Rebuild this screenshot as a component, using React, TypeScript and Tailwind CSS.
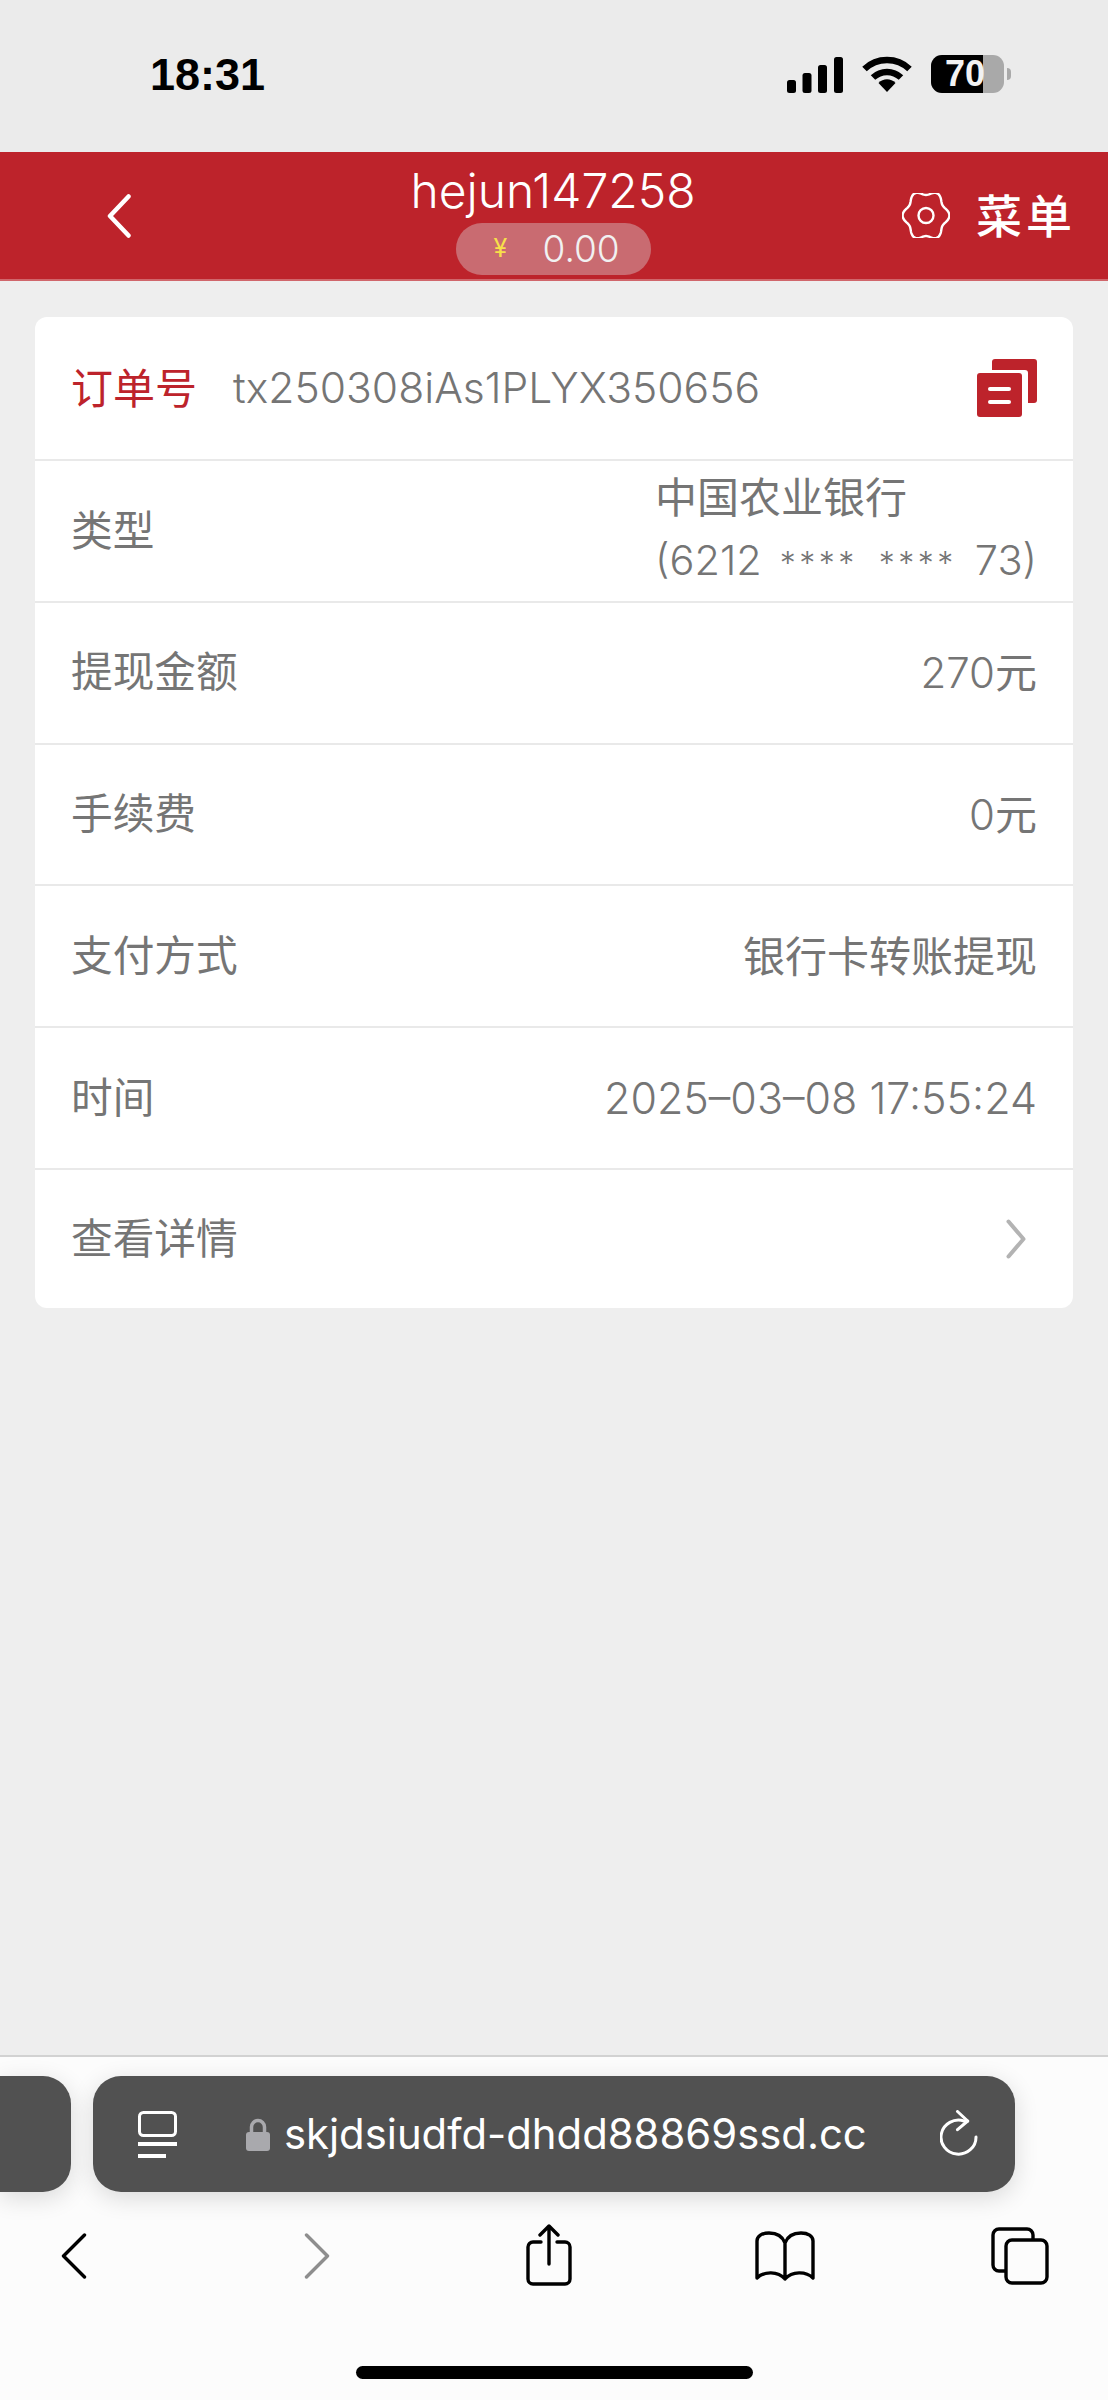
const cjk = 'Inter,"Noto Sans CJK SC",sans-serif';

// Wavy outline of the menu gear, sampled around a circle
const gearPath = (() => {
  const pts: string[] = [];
  for (let i = 0; i < 120; i++) {
    const t = (i / 120) * Math.PI * 2;
    const r = 21.2 + 2.2 * Math.cos(6 * t);
    pts.push(`${(24 + r * Math.cos(t)).toFixed(2)} ${(22.5 + r * 1.08 * Math.sin(t)).toFixed(2)}`);
  }
  return `M${pts.join('L')}Z`;
})();

function StatusBar() {
  return (
    <div className="h-[152px] shrink-0 bg-[#ebebeb] flex items-start pt-[55px] pl-[150px]">
      <span className="w-[637px] text-[45px] leading-[40px] font-bold text-black" style={{ fontFamily: '"Liberation Sans",sans-serif' }}>
        18:31
      </span>
      <svg width="56" height="36" viewBox="0 0 56 36" className="mt-[2px]">
        <rect x="0" y="23" width="9" height="13" rx="2.5" />
        <rect x="15.5" y="16" width="9" height="20" rx="2.5" />
        <rect x="31" y="8" width="9" height="28" rx="2.5" />
        <rect x="47" y="0" width="9" height="36" rx="2.5" />
      </svg>
      <svg width="50" height="36" viewBox="0 0 50 36" className="ml-[19px] mt-[1px]">
        <path d="M2.5 13C15 1 35 1 47.5 13" fill="none" stroke="#000" strokeWidth="6.5" />
        <path d="M11 21.5C19 14 31 14 39 21.5" fill="none" stroke="#000" strokeWidth="6.5" />
        <path d="M16.5 27C21 22 29 22 33.5 27L25 36Z" />
      </svg>
      <div className="ml-[19px] relative w-[73px] h-[38px] rounded-[11px] overflow-hidden bg-[#a9a9a9]">
        <div className="w-[52px] h-full bg-black" />
        <span className="absolute left-[14px] top-[1px] text-[36px] leading-[36px] font-bold text-[#f2f2f2]" style={{ fontFamily: '"Liberation Sans",sans-serif' }}>
          70
        </span>
      </div>
      <div className="ml-[3px] mt-[13px] w-[4px] h-[12px] rounded-r-full bg-[#a9a9a9]" />
    </div>
  );
}

function Header() {
  return (
    <div className="h-[129px] shrink-0 bg-[#bd232b] border-b-2 border-[#d0666b] flex items-center relative text-white" style={{ fontFamily: cjk }}>
      <svg width="24" height="44" viewBox="0 0 24 44" className="ml-[107px]">
        <path d="M21.5 2.5L3 22L21.5 41.5" fill="none" stroke="#fff" strokeWidth="4.5" strokeLinecap="round" strokeLinejoin="round" />
      </svg>
      <div className="absolute left-[355px] w-[396px] top-[13px] flex flex-col items-center">
        <div className="text-[48px] leading-[52px] font-light">hejun147258</div>
        <div className="w-[195px] h-[52px] mt-[6px] rounded-[26px] bg-[#c96b71] flex items-center pl-[38px]">
          <span className="text-[25px] text-[#f7e04a] w-[49px]">¥</span>
          <span className="text-[37px] font-light text-[#f1f1f1]">0.00</span>
        </div>
      </div>
      <div className="ml-auto mr-[32px] flex items-center gap-[26px]">
        <svg width="48" height="45" viewBox="0 0 48 45">
          <path d={gearPath} fill="none" stroke="#fff" strokeWidth="2.4" />
          <circle cx="24" cy="22.5" r="7.5" fill="none" stroke="#fff" strokeWidth="2.4" />
        </svg>
        <span className="text-[46px] leading-[52px] font-medium tracking-[4px]">菜单</span>
      </div>
    </div>
  );
}

function CopyIcon() {
  return (
    <svg width="60" height="58" viewBox="0 0 60 58" className="shrink-0">
      <path d="M15 3a3 3 0 0 1 3-3h39a3 3 0 0 1 3 3v38a3 3 0 0 1-3 3h-6V14a3 3 0 0 0-3-3H15Z" fill="#bd232b" />
      <rect x="0" y="14" width="45" height="44" rx="3" fill="#bd232b" />
      <rect x="11" y="28" width="23" height="4" rx="2" fill="#fff" />
      <rect x="11" y="41" width="23" height="4" rx="2" fill="#fff" />
    </svg>
  );
}

function Card() {
  const row = 'h-[141.8px] px-[36px] flex items-center justify-between border-b-2 border-[#e9e9e9]';
  const stars = 'text-[32px] tracking-[3.5px] font-light';
  const latin = 'font-light text-[42.6px]';
  return (
    <div className="mx-[35px] mt-[36px] bg-white rounded-[12px] overflow-hidden text-[41.7px] text-[#757575]" style={{ fontFamily: cjk }}>
      <div className="h-[144px] pl-[36px] pr-[36px] flex items-center border-b-2 border-[#e9e9e9]">
        <span className="text-[#bd232b] w-[162px] text-[42px]">订单号</span>
        <span className={`flex-1 ${latin}`}>tx250308iAs1PLYX350656</span>
        <CopyIcon />
      </div>
      <div className={row}>
        <span>类型</span>
        <div className="leading-[62px]">
          <div className="text-[42px]">中国农业银行</div>
          <div className="flex items-baseline font-light text-[41.5px]">
            <span>(6212</span>
            <span className={`${stars} ml-[18px]`}>****</span>
            <span className={`${stars} ml-[21px]`}>****</span>
            <span className="ml-[18px]">73)</span>
          </div>
        </div>
      </div>
      <div className={row}>
        <span>提现金额</span>
        <span className="text-[42px]"><span className="font-light">270</span>元</span>
      </div>
      <div className={row}>
        <span>手续费</span>
        <span className="text-[42px]"><span className="font-light">0</span>元</span>
      </div>
      <div className={row}>
        <span>支付方式</span>
        <span className="text-[42px]">银行卡转账提现</span>
      </div>
      <div className={row}>
        <span>时间</span>
        <span className="font-light text-[43px]">2025–03–08 17:55:24</span>
      </div>
      <div className="h-[138px] px-[36px] flex items-center justify-between">
        <span>查看详情</span>
        <svg width="20" height="40" viewBox="0 0 20 40" className="mr-[11px]">
          <path d="M2.5 2.5L17.5 20L2.5 37.5" fill="none" stroke="#b3b3b3" strokeWidth="4" strokeLinecap="round" strokeLinejoin="round" />
        </svg>
      </div>
    </div>
  );
}

function AddressBar() {
  return (
    <div className="h-[116px] mt-[19px] flex items-stretch">
      <div className="w-[71px] rounded-r-[28px] bg-[#515151] shadow-[0_6px_24px_rgba(0,0,0,0.14)]" />
      <div className="w-[922px] ml-[22px] rounded-[28px] bg-[#515151] shadow-[0_6px_24px_rgba(0,0,0,0.14)] flex items-center text-white">
        <svg width="40" height="47" viewBox="0 0 40 47" className="ml-[45px]">
          <rect x="1.5" y="1.5" width="36" height="23" rx="4" fill="none" stroke="#fff" strokeWidth="3" />
          <rect x="0" y="31" width="39" height="4" fill="#fff" />
          <rect x="0" y="43" width="28" height="4" fill="#fff" />
        </svg>
        <svg width="24" height="33" viewBox="0 0 24 33" className="ml-[68px]">
          <path d="M5.5 15V9a6.5 6.5 0 0 1 13 0v6" fill="none" stroke="#a9a9ad" strokeWidth="3.5" />
          <rect x="0" y="14" width="24" height="19" rx="3" fill="#a9a9ad" />
        </svg>
        <span className="ml-[14px] w-[581px] whitespace-nowrap text-[41.8px] leading-[48px]" style={{ fontFamily: 'Inter,sans-serif' }}>
          skjdsiudfd-dhdd88869ssd.cc
        </span>
        <svg width="40" height="48" viewBox="0 0 40 48" className="ml-[75px]">
          <path d="M27.7 11H24A17.5 17 0 1 0 36 27" fill="none" stroke="#fff" strokeWidth="3" strokeLinecap="round" strokeLinejoin="round" />
          <path d="M17.5 1.5L27.7 11L17.5 19.7" fill="none" stroke="#fff" strokeWidth="3" strokeLinecap="round" strokeLinejoin="round" />
        </svg>
      </div>
    </div>
  );
}

function Toolbar() {
  const s = { fill: 'none', stroke: '#000', strokeWidth: 3.4, strokeLinecap: 'round' as const, strokeLinejoin: 'round' as const };
  return (
    <div className="mt-[32px] h-[62px] relative">
      <svg width="26" height="46" viewBox="0 0 26 46" className="absolute left-[61px] top-[9px]">
        <path d="M23.5 2L2.5 23L23.5 44" {...s} />
      </svg>
      <svg width="26" height="46" viewBox="0 0 26 46" className="absolute left-[304px] top-[9px]">
        <path d="M2.5 2L23.5 23L2.5 44" {...s} stroke="#8e8e8e" />
      </svg>
      <svg width="46" height="62" viewBox="0 0 46 62" className="absolute left-[526px] top-0">
        <path d="M15 18H7a5 5 0 0 0-5 5v32a5 5 0 0 0 5 5h32a5 5 0 0 0 5-5V23a5 5 0 0 0-5-5h-8" {...s} />
        <path d="M23 40V2M14 11L23 2L32 11" {...s} />
      </svg>
      <svg width="60" height="50" viewBox="0 0 60 50" className="absolute left-[755px] top-[7px]">
        <path d="M30 12C27 4 21 2 14 2C7 2 2 5 2 10V47C9 40 23 40 30 48C37 40 51 40 58 47V10C58 5 53 2 46 2C39 2 33 4 30 12V48" {...s} />
      </svg>
      <svg width="58" height="58" viewBox="0 0 58 58" className="absolute left-[991px] top-[3px]">
        <path d="M14 44H8a6 6 0 0 1-6-6V8a6 6 0 0 1 6-6h28a6 6 0 0 1 6 6v4" {...s} />
        <rect x="15" y="13" width="41" height="43" rx="6" {...s} />
      </svg>
    </div>
  );
}

export default function App() {
  return (
    <div className="w-[1108px] h-[2400px] flex flex-col bg-[#eeeeee] overflow-hidden">
      <StatusBar />
      <Header />
      <Card />
      <div className="flex-1" />
      <div className="h-[345px] shrink-0 bg-[#fcfcfc] border-t-2 border-[#d2d2d2] flex flex-col">
        <AddressBar />
        <Toolbar />
        <div className="mt-auto mb-[21px] mx-auto w-[397px] h-[13px] rounded-full bg-black" />
      </div>
    </div>
  );
}
